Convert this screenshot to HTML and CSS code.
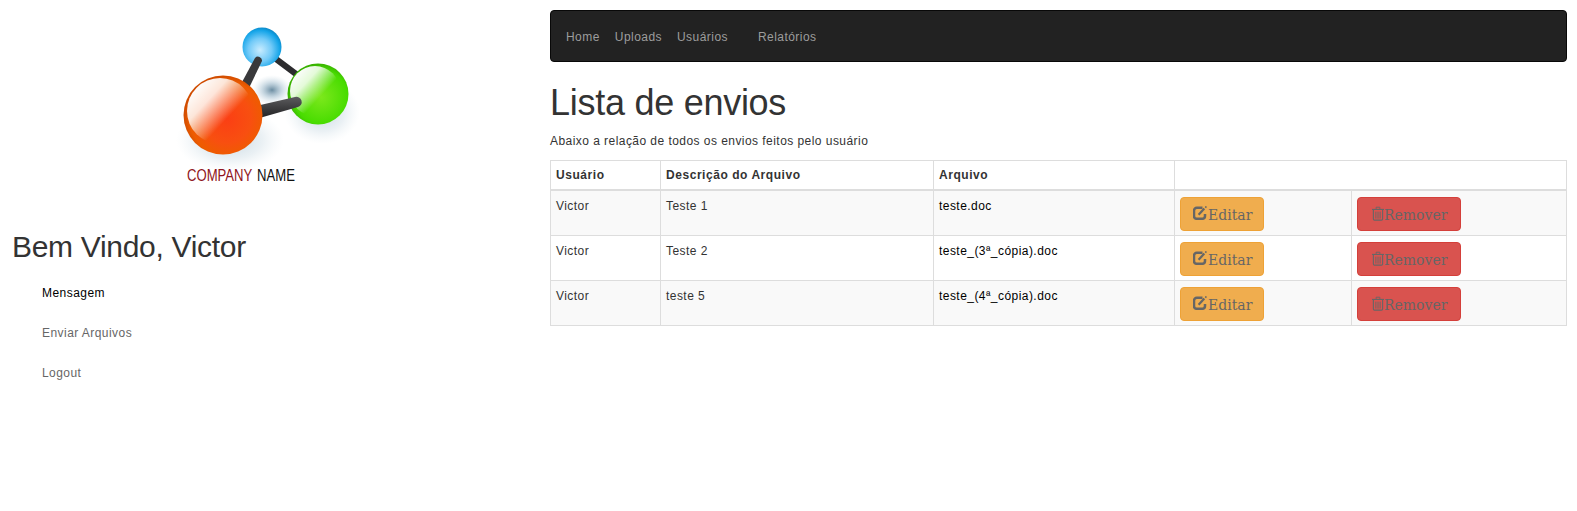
FILE: index.html
```html
<!DOCTYPE html>
<html lang="pt">
<head>
<meta charset="utf-8">
<title>Lista de envios</title>
<link rel="stylesheet" href="styles.css">
</head>
<body>
<div class="page">
  <aside class="side">
    <svg class="logo" width="190" height="170" viewBox="0 0 190 170" xmlns="http://www.w3.org/2000/svg">
      <defs>
        <radialGradient id="orange" cx="0.55" cy="0.55" r="0.55">
          <stop offset="0" stop-color="#fb3f14"/><stop offset="0.55" stop-color="#f84f10"/><stop offset="0.85" stop-color="#ee5c00"/><stop offset="1" stop-color="#d04c00"/>
        </radialGradient>
        <linearGradient id="gloss" x1="0.1" y1="0.15" x2="0.8" y2="0.8">
          <stop offset="0" stop-color="#fff"/><stop offset="0.3" stop-color="#fff" stop-opacity="0.85"/><stop offset="0.72" stop-color="#fff" stop-opacity="0"/>
        </linearGradient>
        <radialGradient id="green" cx="0.55" cy="0.55" r="0.55">
          <stop offset="0" stop-color="#7ce81c"/><stop offset="0.8" stop-color="#48dc00"/><stop offset="1" stop-color="#38b000"/>
        </radialGradient>
        <radialGradient id="blue" cx="0.45" cy="0.58" r="0.6">
          <stop offset="0" stop-color="#c8ecff"/><stop offset="0.5" stop-color="#72caf8"/><stop offset="0.85" stop-color="#14a4e8"/><stop offset="1" stop-color="#0a86c4"/>
        </radialGradient>
        <radialGradient id="shade">
          <stop offset="0" stop-color="#5a7f96" stop-opacity="0.9"/><stop offset="0.5" stop-color="#8fb0c4" stop-opacity="0.45"/><stop offset="1" stop-color="#c8dae4" stop-opacity="0"/>
        </radialGradient>
        <radialGradient id="haze">
          <stop offset="0" stop-color="#a4bfd0" stop-opacity="0.65"/><stop offset="0.6" stop-color="#c4d6e0" stop-opacity="0.35"/><stop offset="1" stop-color="#dde8ee" stop-opacity="0"/>
        </radialGradient>
        <linearGradient id="bar" x1="0" y1="0" x2="0" y2="1">
          <stop offset="0" stop-color="#5c5c5e"/><stop offset="1" stop-color="#1e1e20"/>
        </linearGradient>
      </defs>
      <ellipse cx="152" cy="92" rx="38" ry="32" fill="url(#haze)"/>
      <ellipse cx="60" cy="120" rx="54" ry="32" fill="url(#haze)"/>
      <ellipse cx="102" cy="70" rx="20" ry="15" fill="url(#shade)"/>
      <path d="M102 36 L126 54" stroke="#2c2c2e" stroke-width="6" stroke-linecap="round"/>
      <circle cx="148" cy="74" r="30.5" fill="url(#green)"/>
      <circle cx="145" cy="71" r="25" fill="url(#gloss)"/>
      <path d="M86 86 L125 77 A5 5 0 0 1 128 87 L86 99 Z" fill="url(#bar)"/>
      <circle cx="92" cy="27" r="19.5" fill="url(#blue)"/>
      <path d="M85 38 A4 4 0 0 1 92 41 L79 68 L71 64 Z" fill="#39393b"/>
      <circle cx="53" cy="95" r="39.5" fill="url(#orange)"/>
      <circle cx="50" cy="91" r="33" fill="url(#gloss)"/>
      <text class="logo-text logo-red" transform="translate(17 161) scale(0.82 1)">COMPANY</text>
      <text class="logo-text logo-dark" transform="translate(87 161) scale(0.82 1)">NAME</text>
    </svg>
    <h2 class="welcome">Bem Vindo, Victor</h2>
    <ul class="side-nav">
      <li><a class="side-link current" href="#">Mensagem</a></li>
      <li><a class="side-link" href="#">Enviar Arquivos</a></li>
      <li><a class="side-link" href="#">Logout</a></li>
    </ul>
  </aside>
  <main class="content">
    <nav class="navbar">
      <a class="nav-link" href="#">Home</a>
      <a class="nav-link" href="#">Uploads</a>
      <a class="nav-link nav-link-wide" href="#">Usuários</a>
      <a class="nav-link" href="#">Relatórios</a>
    </nav>
    <h1 class="title">Lista de envios</h1>
    <p class="lead">Abaixo a relação de todos os envios feitos pelo usuário</p>
    <table class="grid">
      <colgroup>
        <col class="c1"><col class="c2"><col class="c3"><col class="c4"><col class="c5">
      </colgroup>
      <thead>
        <tr><th>Usuário</th><th>Descrição do Arquivo</th><th>Arquivo</th><th colspan="2"></th></tr>
      </thead>
      <tbody>
        <tr class="odd">
          <td>Victor</td><td>Teste 1</td><td><a class="file" href="#">teste.doc</a></td>
          <td><a class="btn warn" href="#"><svg class="ico" width="15" height="14" viewBox="0 0 15 14"><use href="#i-edit"/></svg>Editar</a></td>
          <td><a class="btn danger" href="#"><svg class="ico ico-trash" width="12" height="15" viewBox="0 0 13 16"><use href="#i-trash"/></svg>Remover</a></td>
        </tr>
        <tr>
          <td>Victor</td><td>Teste 2</td><td><a class="file" href="#">teste_(3ª_cópia).doc</a></td>
          <td><a class="btn warn" href="#"><svg class="ico" width="15" height="14" viewBox="0 0 15 14"><use href="#i-edit"/></svg>Editar</a></td>
          <td><a class="btn danger" href="#"><svg class="ico ico-trash" width="12" height="15" viewBox="0 0 13 16"><use href="#i-trash"/></svg>Remover</a></td>
        </tr>
        <tr class="odd">
          <td>Victor</td><td>teste 5</td><td><a class="file" href="#">teste_(4ª_cópia).doc</a></td>
          <td><a class="btn warn" href="#"><svg class="ico" width="15" height="14" viewBox="0 0 15 14"><use href="#i-edit"/></svg>Editar</a></td>
          <td><a class="btn danger" href="#"><svg class="ico ico-trash" width="12" height="15" viewBox="0 0 13 16"><use href="#i-trash"/></svg>Remover</a></td>
        </tr>
      </tbody>
    </table>
  </main>
</div>
<svg class="sprite" xmlns="http://www.w3.org/2000/svg">
  <symbol id="i-edit" viewBox="0 0 15 14">
    <path d="M12 8V10A2.8 2.8 0 0 1 9.2 12.8H3.8A2.8 2.8 0 0 1 1 10V4.6A2.8 2.8 0 0 1 3.8 1.8H9.5" fill="none" stroke="currentColor" stroke-width="2.5"/>
    <path d="M5.6 8.8L11.3 2.6" stroke="currentColor" stroke-width="2.2" fill="none"/>
    <path d="M12.4 0L14 0.8L13 2.2L11.8 1.2Z" fill="currentColor"/>
  </symbol>
  <symbol id="i-trash" viewBox="0 0 13 16">
    <path d="M4.5 3V1.2H8.5V3" fill="none" stroke="currentColor" stroke-width="1"/>
    <path d="M0 3H13V4.2H0Z" fill="currentColor"/>
    <path d="M1.5 4.2V14A1.2 1.2 0 0 0 2.7 15.2H10.3A1.2 1.2 0 0 0 11.5 14V4.2" fill="none" stroke="currentColor" stroke-width="1.2"/>
    <path d="M4.2 6V13.5M6.5 6V13.5M8.8 6V13.5" stroke="currentColor" stroke-width="1"/>
  </symbol>
</svg>
</body>
</html>
```
FILE: styles.css
```css
* { box-sizing: border-box; }
html, body { margin: 0; padding: 0; }
body {
  background: #fff;
  color: #333;
  font-family: "Liberation Sans", Arial, sans-serif;
  font-size: 12px;
  line-height: 17px;
  letter-spacing: 0.45px;
}
a { text-decoration: none; }
.page { display: flex; align-items: flex-start; min-height: 511px; }
.side { width: 550px; flex: none; padding: 20px 20px 0 0; }
.logo { display: block; margin: 0 auto; }
.logo-text { font-family: "Liberation Sans", Arial, sans-serif; font-size: 16px; letter-spacing: 0; }
.logo-red { fill: #8f1420; }
.logo-dark { fill: #111; }
.welcome {
  margin: 40px 0 0 12px;
  font-size: 30px;
  font-weight: 400;
  line-height: 33px;
  letter-spacing: -0.3px;
}
.side-nav { list-style: none; margin: 11px 0 0; padding: 0; }
.side-link { display: block; padding: 11px 15px 12px 42px; color: #666; height: 40px; }
.side-link.current { color: #000; }
.content { flex: 1; min-width: 0; padding: 10px 10px 0 0; }
.navbar {
  display: flex;
  align-items: center;
  gap: 15px;
  height: 52px;
  padding: 2px 15px 0;
  background: #222;
  border: 1px solid #080808;
  border-radius: 4px;
}
.nav-link { color: #9d9d9d; }
.nav-link-wide { margin-right: 15px; }
.title {
  margin: 21px 0 0;
  font-size: 36px;
  font-weight: 400;
  line-height: 40px;
  letter-spacing: -0.27px;
}
.lead { margin: 10px 0 0; }
.grid {
  width: 100%;
  margin-top: 10px;
  border-collapse: collapse;
  table-layout: fixed;
}
.c1 { width: 110px; }
.c2 { width: 273px; }
.c3 { width: 241px; }
.c4 { width: 177px; }
.grid th, .grid td {
  padding: 5px;
  border: 1px solid #ddd;
  text-align: left;
  vertical-align: top;
}
.grid th { height: 29px; padding-top: 6px; font-weight: 700; letter-spacing: 0.55px; border-bottom-width: 2px; }
.grid td { height: 45px; padding-bottom: 4px; line-height: 21px; }
.odd td { background: #f9f9f9; }
.file { color: #000; }
.btn {
  display: inline-flex;
  align-items: center;
  vertical-align: top;
  height: 34px;
  margin-top: 1px;
  padding: 1px 12px 0;
  border: 1px solid transparent;
  border-radius: 4px;
  color: #666;
  font-family: "DejaVu Serif", serif;
  font-size: 14px;
  line-height: 20px;
  letter-spacing: 0;
}
.warn { width: 84px; background: #f0ad4e; border-color: #eea236; }
.danger { width: 104px; background: #d9534f; border-color: #d43f3a; }
.ico { flex: none; margin-bottom: 3px; }
.ico-trash { margin: 0 0 3px 2px; }
.sprite { display: none; }
```
